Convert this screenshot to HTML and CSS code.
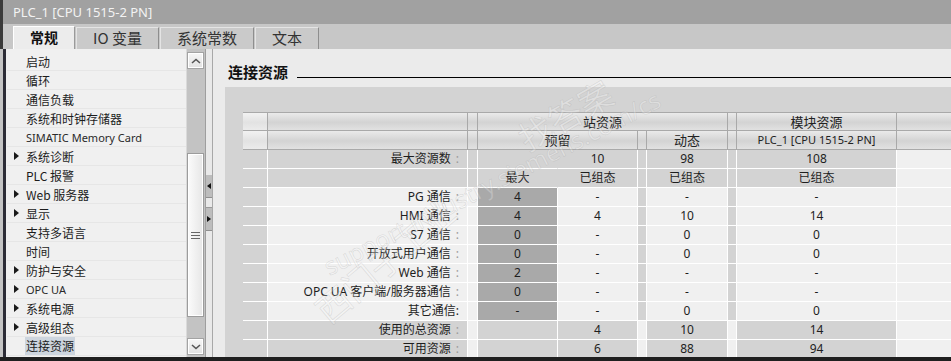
FILE: index.html
```html
<!DOCTYPE html>
<html lang="zh-CN">
<head>
<meta charset="utf-8">
<title>PLC_1 [CPU 1515-2 PN]</title>
<link rel="stylesheet" href="styles.css">
</head>
<body>
<div class="window">
  <div class="titlebar">PLC_1 [CPU 1515-2 PN]</div>
  <div class="tabbar">
    <div class="tab active">常规</div>
    <div class="tab">IO 变量</div>
    <div class="tab">系统常数</div>
    <div class="tab">文本</div>
  </div>
  <div class="main">
    <div class="edge"></div>
    <nav class="nav">
      <ul class="navlist">
        <li><span class="mk"></span><span>启动</span></li>
        <li><span class="mk"></span><span>循环</span></li>
        <li><span class="mk"></span><span>通信负载</span></li>
        <li><span class="mk"></span><span>系统和时钟存储器</span></li>
        <li><span class="mk"></span><span class="latin">SIMATIC Memory Card</span></li>
        <li><span class="mk tri"></span><span>系统诊断</span></li>
        <li><span class="mk"></span><span>PLC 报警</span></li>
        <li><span class="mk tri"></span><span>Web 服务器</span></li>
        <li><span class="mk tri"></span><span>显示</span></li>
        <li><span class="mk"></span><span>支持多语言</span></li>
        <li><span class="mk"></span><span>时间</span></li>
        <li><span class="mk tri"></span><span>防护与安全</span></li>
        <li><span class="mk tri"></span><span class="latin">OPC UA</span></li>
        <li><span class="mk tri"></span><span>系统电源</span></li>
        <li><span class="mk tri"></span><span>高级组态</span></li>
        <li><span class="mk"></span><span class="sel">连接资源</span></li>
      </ul>
    </nav>
    <div class="vscroll">
      <div class="sbtn"><svg width="10" height="6" viewBox="0 0 10 6"><polyline points="1,5 5,1.5 9,5" fill="none" stroke="#555" stroke-width="1.6"/></svg></div>
      <div class="strack t1"></div>
      <div class="thumb"><svg width="9" height="7" viewBox="0 0 9 7"><path d="M0 0.5H9M0 3.5H9M0 6.5H9" stroke="#666" stroke-width="1"/></svg></div>
      <div class="strack t2"></div>
      <div class="sbtn"><svg width="10" height="6" viewBox="0 0 10 6"><polyline points="1,1 5,4.5 9,1" fill="none" stroke="#555" stroke-width="1.6"/></svg></div>
    </div>
    <div class="splitter">
      <div class="spbtn"><span class="arr left"></span></div>
      <div class="spgap"></div>
      <div class="spbtn"><span class="arr right"></span></div>
    </div>
    <section class="content">
      <h2 class="heading"><span class="htext">连接资源</span><span class="rule"></span></h2>
      <div class="panel">
        <div class="grid">
          <!-- row 1 -->
          <div class="c h h0"></div><div class="c h"></div><div class="c h"></div>
          <div class="c h s4">站资源</div><div class="c h"></div>
          <div class="c h">模块资源</div><div class="c h"></div>
          <!-- row 2 -->
          <div class="c h h0"></div><div class="c h"></div><div class="c h"></div>
          <div class="c h s2">预留</div><div class="c h"></div><div class="c h">动态</div><div class="c h"></div>
          <div class="c h sm">PLC_1 [CPU 1515-2 PN]</div><div class="c h"></div>
          <!-- row 3 -->
          <div class="c g"></div><div class="c g lab">最大资源数<span class="co">:</span></div><div class="c g"></div>
          <div class="c g nb"></div><div class="c g">10</div><div class="c g"></div><div class="c g">98</div><div class="c g"></div><div class="c g">108</div><div class="c l"></div>
          <!-- row 4 -->
          <div class="c g"></div><div class="c g"></div><div class="c g"></div>
          <div class="c g nb">最大</div><div class="c g">已组态</div><div class="c g"></div><div class="c g">已组态</div><div class="c g"></div><div class="c g">已组态</div><div class="c l"></div>
          <!-- data rows -->
          <div class="c g"></div><div class="c l lab">PG 通信<span class="co">:</span></div><div class="c l"></div>
          <div class="c d">4</div><div class="c l">-</div><div class="c g"></div><div class="c l">-</div><div class="c g"></div><div class="c l">-</div><div class="c l"></div>

          <div class="c g"></div><div class="c l lab">HMI 通信<span class="co">:</span></div><div class="c l"></div>
          <div class="c d">4</div><div class="c l">4</div><div class="c g"></div><div class="c l">10</div><div class="c g"></div><div class="c l">14</div><div class="c l"></div>

          <div class="c g"></div><div class="c l lab">S7 通信<span class="co">:</span></div><div class="c l"></div>
          <div class="c d">0</div><div class="c l">-</div><div class="c g"></div><div class="c l">0</div><div class="c g"></div><div class="c l">0</div><div class="c l"></div>

          <div class="c g"></div><div class="c l lab">开放式用户通信<span class="co">:</span></div><div class="c l"></div>
          <div class="c d">0</div><div class="c l">-</div><div class="c g"></div><div class="c l">0</div><div class="c g"></div><div class="c l">0</div><div class="c l"></div>

          <div class="c g"></div><div class="c l lab">Web 通信<span class="co">:</span></div><div class="c l"></div>
          <div class="c d">2</div><div class="c l">-</div><div class="c g"></div><div class="c l">-</div><div class="c g"></div><div class="c l">-</div><div class="c l"></div>

          <div class="c g"></div><div class="c l lab">OPC UA 客户端/服务器通信<span class="co">:</span></div><div class="c l"></div>
          <div class="c d">0</div><div class="c l">-</div><div class="c g"></div><div class="c l">-</div><div class="c g"></div><div class="c l">-</div><div class="c l"></div>

          <div class="c g"></div><div class="c l lab">其它通信:</div><div class="c l"></div>
          <div class="c d">-</div><div class="c l">-</div><div class="c g"></div><div class="c l">0</div><div class="c g"></div><div class="c l">0</div><div class="c l"></div>
          <!-- totals -->
          <div class="c g"></div><div class="c g lab">使用的总资源<span class="co">:</span></div><div class="c l"></div>
          <div class="c g"></div><div class="c g">4</div><div class="c l"></div><div class="c g">10</div><div class="c l"></div><div class="c g">14</div><div class="c l"></div>

          <div class="c g"></div><div class="c g lab">可用资源<span class="co">:</span></div><div class="c l"></div>
          <div class="c g"></div><div class="c g">6</div><div class="c l"></div><div class="c g">88</div><div class="c l"></div><div class="c g">94</div><div class="c l"></div>
        </div>
      </div>
      <div class="wm wm1">西门子工业</div>
      <div class="wm wm2">support.industry.siemens.com/cs</div>
      <div class="wm wm3">找答案</div>
    </section>
  </div>
  <div class="bottombar"></div>
</div>
</body>
</html>
```

FILE: styles.css
```css
* { box-sizing: border-box; }
html, body { margin: 0; padding: 0; }
body {
  width: 951px;
  height: 361px;
  overflow: hidden;
  background: #ebebeb;
  font-family: "Noto Sans", "Noto Sans CJK SC", sans-serif;
  color: #1e1e1e;
}
.window {
  display: flex;
  flex-direction: column;
  width: 951px;
  height: 361px;
}
.titlebar {
  flex: none;
  height: 24px;
  background: #a1a1a1;
  color: #f3f3f3;
  font-size: 13px;
  line-height: 24px;
  padding-left: 10px;
  border-left: 3px solid #3a3a3a;
}
.tabbar {
  flex: none;
  height: 25px;
  background: #c7c7c7;
  border-left: 3px solid #3a3a3a;
  padding-left: 10px;
  display: flex;
  align-items: flex-end;
  gap: 1px;
}
.tab {
  height: 22px;
  padding: 0 16px;
  font-family: "Noto Sans CJK SC", sans-serif;
  font-size: 15px;
  line-height: 20px;
  color: #333;
  background: #cacaca;
  border: 1px solid #8e8e8e;
  border-top-color: #e4e4e4;
  border-left-color: #e4e4e4;
  border-bottom: none;
}
.tab.active {
  height: 23px;
  font-size: 14px;
  font-weight: bold;
  color: #111;
  background: #ececec;
  border-color: #ffffff;
  border-right-color: #9a9a9a;
}
.main {
  flex: 1;
  display: flex;
  min-height: 0;
}
.edge {
  flex: none;
  width: 7px;
  background: linear-gradient(90deg, #c4c4c4 0 3px, #2c2c36 3px 6px, #f0f0f0 6px);
}
.nav {
  flex: none;
  width: 179px;
  background: #f0f0f0;
  padding-top: 3px;
}
.navlist {
  list-style: none;
  margin: 0;
  padding: 0;
}
.navlist li {
  height: 19px;
  display: flex;
  align-items: center;
  padding-left: 7px;
  border-bottom: 1px solid #e6e6e6;
  font-family: "Noto Sans CJK SC", sans-serif;
  font-size: 12px;
  color: #1c1c1c;
  white-space: nowrap;
}
.mk {
  flex: none;
  width: 12px;
  height: 8px;
}
.mk.tri {
  width: 0;
  height: 0;
  margin-right: 7px;
  border-left: 5px solid #1a1a1a;
  border-top: 4px solid transparent;
  border-bottom: 4px solid transparent;
}
.latin {
  font-family: "Noto Sans", sans-serif;
  font-size: 11px;
  color: #2a2a2a;
}
.sel {
  background: #cdd5de;
  line-height: 18px;
  padding: 0 1px;
  margin-left: -1px;
}
.vscroll {
  flex: none;
  width: 19px;
  background: #c3c3c3;
  border-left: 1px solid #dadada;
  padding: 3px 1px 1px 0;
  display: flex;
  flex-direction: column;
}
.sbtn {
  flex: none;
  height: 17px;
  background: linear-gradient(#f6f6f6, #e2e2e2);
  border: 1px solid #a3a3a3;
  box-shadow: inset 0 0 0 1px #ffffff;
  display: flex;
  align-items: center;
  justify-content: center;
}
.strack.t1 { flex: none; height: 84px; }
.strack.t2 { flex: none; height: 21px; }
.thumb {
  flex: none;
  height: 164px;
  background: linear-gradient(90deg, #fbfbfb, #e6e6e6);
  border: 1px solid #9c9c9c;
  box-shadow: inset 0 0 0 1px #ffffff;
  display: flex;
  align-items: center;
  justify-content: center;
}
.splitter {
  flex: none;
  width: 8px;
  background: #e9e9e9;
  border-left: 1px solid #9e9e9e;
  border-right: 1px solid #a8a8a8;
  padding-top: 126px;
  display: flex;
  flex-direction: column;
}
.spbtn {
  flex: none;
  height: 23px;
  background: #bdbdbd;
  border-bottom: 1px solid #8f8f8f;
  display: flex;
  align-items: center;
  justify-content: center;
}
.spgap {
  flex: none;
  height: 10px;
  border-bottom: 1px solid #9a9a9a;
}
.arr {
  width: 0;
  height: 0;
  border-top: 3px solid transparent;
  border-bottom: 3px solid transparent;
}
.arr.left { border-right: 4px solid #111; }
.arr.right { border-left: 4px solid #111; }
.content {
  flex: 1;
  min-width: 0;
  position: relative;
  overflow: hidden;
  display: flex;
  flex-direction: column;
  background: #ebebeb;
}
.heading {
  flex: none;
  height: 38px;
  margin: 0;
  padding: 14px 0 0 15px;
  display: flex;
  align-items: flex-start;
}
.htext {
  font-family: "Noto Sans CJK SC", sans-serif;
  font-size: 15px;
  font-weight: bold;
  line-height: 18px;
  color: #111;
}
.rule {
  flex: 1;
  height: 1px;
  background: #000;
  margin: 14px 0 0 9px;
}
.panel {
  flex: 1;
  margin-left: 12px;
  background: #d3d3d3;
  padding: 25px 0 0 18px;
  overflow: hidden;
}
.grid {
  display: grid;
  grid-template-columns: 25px 200px 10px 80px 80px 9px 81px 9px 160px 60px;
  grid-auto-rows: 19px;
  width: 714px;
  font-family: "Noto Sans", "Noto Sans CJK SC", sans-serif;
  font-size: 12px;
  color: #1e1e1e;
}
.c {
  border-right: 1px solid #ffffff;
  border-bottom: 1px solid #ffffff;
  display: flex;
  align-items: center;
  justify-content: center;
  white-space: nowrap;
  line-height: 18px;
}
.c.nb { border-right-color: #d3d3d3; }
.h {
  background: linear-gradient(#eaeaea, #d3d3d3 55%, #e1e1e1);
  border-right: 1px solid #a9a9a9;
  border-bottom: 1px solid #a9a9a9;
  font-family: "Noto Sans CJK SC", sans-serif;
  font-size: 13px;
  color: #222;
}
.grid > .h:nth-child(-n+7) { border-top: 1px solid #a9a9a9; }
.h0 { background: linear-gradient(#f2f2f2, #e2e2e2 55%, #ebebeb); }
.s4 { grid-column: span 4; }
.s2 { grid-column: span 2; }
.sm { font-family: "Noto Sans", sans-serif; font-size: 11px; }
.g { background: #d3d3d3; }
.l { background: #f0f0f0; }
.d { background: #a9a9a9; }
.lab {
  justify-content: flex-end;
  padding-right: 8px;
  font-family: "Noto Sans", "Noto Sans CJK SC", sans-serif;
}
.co {
  color: #9a9a9a;
  margin-left: 5px;
}
.bottombar {
  flex: none;
  height: 4px;
  background: #1f1f1f;
}
.wm {
  position: absolute;
  white-space: nowrap;
  color: rgba(255, 255, 255, 0.25);
  -webkit-text-stroke: 0.6px rgba(160, 160, 160, 0.3);
  pointer-events: none;
}
.wm1 {
  left: 87px;
  top: 186px;
  font-family: "Noto Sans CJK SC", sans-serif;
  font-size: 34px;
  line-height: 50px;
  transform: rotate(-40deg);
}
.wm2 {
  left: 92px;
  top: 118px;
  font-family: "Noto Sans", sans-serif;
  font-size: 24px;
  line-height: 32px;
  transform: rotate(-27deg);
}
.wm3 {
  left: 301px;
  top: 41px;
  font-family: "Noto Sans CJK SC", sans-serif;
  font-size: 34px;
  line-height: 50px;
  transform: rotate(-30deg);
}
```
